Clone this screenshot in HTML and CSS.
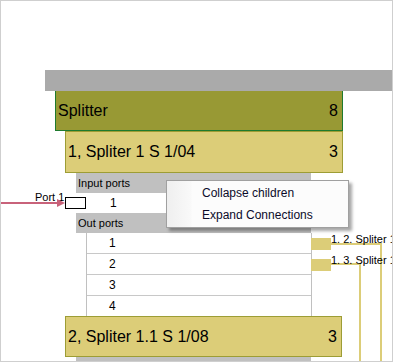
FILE: index.html
```html
<!DOCTYPE html>
<html lang="en">
<head>
    <meta charset="UTF-8">
    <meta name="viewport" content="width=device-width, initial-scale=1.0">
    <title>Splitter Diagram</title>
    <link rel="stylesheet" href="styles.css">
</head>
<body>

<div class="canvas">
    <div class="tree">
        <div class="group-bar"></div>

        <div class="node-root">
            <span>Splitter</span>
            <span>8</span>
        </div>

        <div class="node-child">
            <div class="box">
                <span>1, Spliter 1 S 1/04</span>
                <span>3</span>
            </div>
            <div class="ports">
                <div class="ports-head">Input ports</div>
                <div class="port-in">
                    <span class="port-pin"></span>
                    <span class="port-num">1</span>
                </div>
                <div class="ports-head">
                    <span>Out ports</span>
                    <span class="toggle"></span>
                </div>
                <div class="out-list">
                    <div class="out-row">1</div>
                    <div class="out-row">2</div>
                    <div class="out-row">3</div>
                    <div class="out-row">4</div>
                </div>
            </div>
        </div>

        <div class="node-child next">
            <div class="box">
                <span>2, Spliter 1.1 S 1/08</span>
                <span>3</span>
            </div>
            <div class="ports">
                <div class="ports-head"></div>
            </div>
        </div>
    </div>

    <!-- incoming connection -->
    <span class="port-label">Port 1</span>
    <svg class="arrow-in" width="66" height="14" viewBox="0 0 66 14">
        <line x1="0" y1="7" x2="59" y2="7" stroke="#c8627a" stroke-width="2"/>
        <polygon points="57,3 65,7 57,11" fill="#c8627a"/>
    </svg>

    <!-- outgoing connections -->
    <svg class="links-out" width="81" height="126" viewBox="0 0 81 126">
        <rect x="0" y="2" width="20" height="12" fill="#dccd78"/>
        <rect x="0" y="23" width="20" height="12" fill="#dccd78"/>
        <polyline points="20,8 70,8 70,126" fill="none" stroke="#dccd78" stroke-width="2"/>
        <polyline points="20,28 49,28 49,126" fill="none" stroke="#dccd78" stroke-width="2"/>
    </svg>
    <span class="link-label first">1. 2. Spliter 1</span>
    <span class="link-label second">1. 3. Spliter 1</span>

    <!-- context menu -->
    <div class="context-menu">
        <div class="menu-item">Collapse children</div>
        <div class="menu-item">Expand Connections</div>
    </div>
</div>

</body>
</html>
```

FILE: styles.css
```css
body {
    margin: 0;
    font-family: "Liberation Sans", Arial, sans-serif;
    color: #000;
}
.canvas {
    position: relative;
    width: 393px;
    height: 362px;
    box-sizing: border-box;
    border: 1px solid #cfcfcf;
    background: #fff;
    overflow: hidden;
}
.tree {
    padding-top: 69px;
}
.group-bar {
    margin-left: 44px;
    height: 21px;
    background: #aaaaaa;
}
.node-root {
    margin-left: 54px;
    width: 288px;
    height: 40px;
    box-sizing: border-box;
    border: 1px solid #1f7a2e;
    border-top: none;
    background: #989934;
    display: flex;
    justify-content: space-between;
    align-items: center;
    padding: 0 4px 0 2px;
    font-size: 16px;
}
.node-child {
    margin-left: 64px;
    width: 278px;
}
.node-child.next {
    margin-top: -1px;
}
.box {
    height: 42px;
    box-sizing: border-box;
    border: 1px solid #9d9d35;
    background: #dccd78;
    display: flex;
    justify-content: space-between;
    align-items: center;
    padding: 0 4px 0 2px;
    font-size: 16px;
}
.next .box {
    height: 41px;
    width: 277px;
}
.ports {
    margin-left: 11px;
    width: 235px;
}
.ports-head {
    height: 20px;
    line-height: 20px;
    background: #c0c0c0;
    font-size: 11px;
    padding-left: 2px;
    display: flex;
    justify-content: space-between;
}
.toggle {
    width: 5px;
    height: 2px;
    background: #222;
    align-self: flex-end;
    margin: 0 5px 5px 0;
}
.port-in {
    height: 20px;
    display: flex;
    align-items: center;
    font-size: 12px;
}
.port-pin {
    width: 21px;
    height: 12px;
    box-sizing: border-box;
    border: 1px solid #000;
    margin-left: -11px;
    background: #fff;
}
.port-num {
    margin-left: 24px;
}
.out-list {
    margin-left: 10px;
    width: 226px;
    box-sizing: border-box;
    border-left: 1px solid #c0c0c0;
    border-right: 1px solid #c0c0c0;
}
.out-row {
    height: 21px;
    line-height: 21px;
    box-sizing: border-box;
    border-bottom: 1px solid #c8c8c8;
    padding-left: 22px;
    font-size: 12px;
}
.port-label {
    position: absolute;
    left: 34px;
    top: 190px;
    font-size: 11px;
    line-height: 13px;
}
.arrow-in {
    position: absolute;
    left: -1px;
    top: 195px;
}
.links-out {
    position: absolute;
    left: 310px;
    top: 235px;
}
.link-label {
    position: absolute;
    left: 330px;
    font-size: 11px;
    line-height: 13px;
    white-space: nowrap;
}
.link-label.first {
    top: 232px;
}
.link-label.second {
    top: 253px;
}
.context-menu {
    position: absolute;
    left: 165px;
    top: 179px;
    width: 183px;
    box-sizing: border-box;
    border: 1px solid #a0a0a0;
    padding: 1px 0;
    background: linear-gradient(to right, #efefef 0, #f9f9f9 24px, #fcfcfc 25px);
    box-shadow: 3px 3px 3px rgba(0, 0, 0, 0.35);
}
.menu-item {
    height: 22px;
    line-height: 22px;
    padding-left: 35px;
    font-size: 12px;
    color: #0b0b2a;
}
```
